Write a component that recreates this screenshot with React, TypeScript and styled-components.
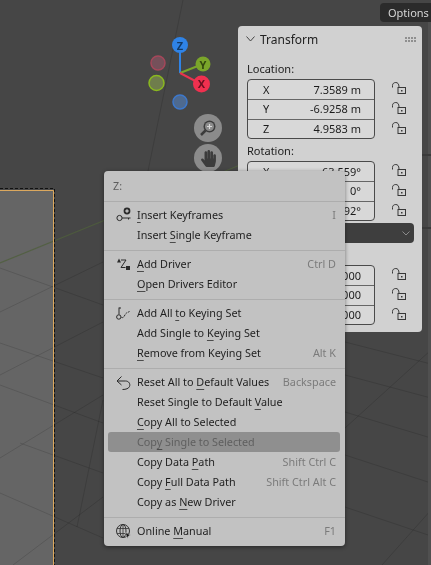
import { FC, ReactNode } from "react";
import styled, { createGlobalStyle } from "styled-components";
import { FaHandPaper } from "react-icons/fa";

const GlobalStyle = createGlobalStyle`
  html, body {
    margin: 0;
    padding: 0;
    background: #464646;
  }
  body {
    font-family: "Noto Sans", "DejaVu Sans", sans-serif;
  }
`;

// the 3d viewport is the free canvas, everything else floats over it
const Viewport = styled.div`
  position: relative;
  width: 431px;
  height: 565px;
  overflow: hidden;
  background: #464646;
  filter: blur(0.35px);
`;

const Scene = styled.svg`
  position: absolute;
  left: 0;
  top: 0;
`;

const OptionsTab = styled.div`
  position: absolute;
  right: 0;
  top: 3px;
  width: 43px;
  height: 19px;
  padding-left: 8px;
  display: flex;
  align-items: center;
  background: #2b2b2b;
  border-radius: 4px 0 0 4px;
  color: #d6d6d6;
  font-size: 11px;
  white-space: nowrap;
  overflow: hidden;
`;

const NavButton = styled.div<{ $top: number }>`
  position: absolute;
  left: 194px;
  top: ${(p) => p.$top}px;
  width: 28px;
  height: 28px;
  border-radius: 50%;
  background: #8b8b8b;
  display: flex;
  align-items: center;
  justify-content: center;
  color: #3c3c3c;
`;

const Panel = styled.div`
  position: absolute;
  left: 238px;
  top: 26px;
  width: 184px;
  height: 306px;
  box-sizing: border-box;
  padding: 0 8px 0 9px;
  background: #d1d1d1;
  border-radius: 4px;
  color: #1c1c1c;
  font-size: 11px;
`;

const PanelHeader = styled.div`
  display: flex;
  align-items: center;
  height: 28px;
  box-sizing: border-box;
  padding-bottom: 2px;
  font-size: 12px;
  color: #222;
`;

const Chevron = styled.svg`
  margin-right: 5px;
  margin-left: -1px;
`;

const PanelTitle = styled.span`
  flex: 1;
`;

const Grip = styled.div`
  display: grid;
  grid-template-columns: repeat(4, 2px);
  gap: 1px;
  margin-right: -2px;

  i {
    display: block;
    width: 2px;
    height: 2px;
    background: #8f8f8f;
  }
`;

const GroupLabel = styled.div<{ $height: number }>`
  display: flex;
  align-items: flex-end;
  height: ${(p) => p.$height}px;
  padding-bottom: 3px;
  box-sizing: border-box;
`;

const FieldRows = styled.div`
  display: flex;
  align-items: flex-start;
  height: 60px;
`;

const FieldBox = styled.div`
  width: 128px;
  box-sizing: border-box;
  border: 1px solid #4a4a4a;
  border-radius: 4px;
  background: #d8d8d8;
  overflow: hidden;
`;

const Field = styled.div`
  display: flex;
  justify-content: space-between;
  align-items: center;
  height: 19.33px;
  box-sizing: border-box;
  padding: 0 13px 1px 15px;
  white-space: nowrap;

  & + & {
    border-top: 1px solid #666;
  }
`;

const LockColumn = styled.div`
  display: flex;
  flex-direction: column;
  margin: 3px 0 0 17px;
`;

const LockIcon = styled.svg`
  display: block;
  margin-bottom: 6px;
`;

const Dropdown = styled.div`
  display: flex;
  align-items: center;
  justify-content: space-between;
  height: 20px;
  margin-top: 2px;
  padding: 0 4px 0 13px;
  background: #3e3e3e;
  border-radius: 4px;
  color: #d8d8d8;
`;

const Menu = styled.div`
  position: absolute;
  left: 104px;
  top: 171px;
  width: 241px;
  height: 375px;
  box-sizing: border-box;
  background: #c2c2c2;
  border-radius: 4px;
  box-shadow: 0 1px 4px rgba(0, 0, 0, 0.45);
  font-size: 10.8px;
  color: #1f1f1f;
`;

const MenuTitle = styled.div`
  display: flex;
  align-items: center;
  height: 25px;
  padding: 4px 0 0 9px;
  box-sizing: border-box;
  color: #5e5e5e;
`;

const Separator = styled.div`
  height: 1px;
  margin: 5px 0 3px;
  background: #adadad;
`;

const MenuRow = styled.div<{ $disabled?: boolean }>`
  display: flex;
  align-items: center;
  height: 20px;
  margin: 0 5px 0 4px;
  padding: 0 4px 0 8px;
  border-radius: 3px;
  white-space: nowrap;
  background: ${(p) => (p.$disabled ? "#8f8f8f" : "transparent")};
  color: ${(p) => (p.$disabled ? "#5f5f5f" : "inherit")};
`;

const IconSlot = styled.span`
  display: flex;
  align-items: center;
  width: 21px;
  height: 16px;
  flex: none;
`;

const RowLabel = styled.span`
  flex: 1;
  margin-top: -2px;
`;

const Mnemonic = styled.span`
  text-decoration: underline;
  text-decoration-color: #4c4c4c;
  text-decoration-skip-ink: none;
  text-underline-offset: 3px;
`;

const Shortcut = styled.span`
  margin-top: -2px;
  color: #7b7b7b;
`;

const ICON_COLOR = "#2a2a2a";

const KeyIcon = () => (
  <svg width="16" height="16" viewBox="0 0 16 16" fill="none" stroke={ICON_COLOR}>
    <circle cx="3.5" cy="11" r="2.6" />
    <path d="M6 11h8.5M12.5 11v1.5" />
    <circle cx="11" cy="4" r="3.4" fill={ICON_COLOR} stroke="none" />
    <path d="M9.2 4h3.6M11 2.2v3.6" stroke="#e6e6e6" />
  </svg>
);

const DriverIcon = () => (
  <svg width="16" height="16" viewBox="0 0 16 16" fill="none" stroke={ICON_COLOR}>
    <path d="M1 6.5L3 2.5l2 4z" fill={ICON_COLOR} stroke="none" />
    <path d="M5 4h5L5 11.5h4.5" />
    <rect x="10" y="10" width="4" height="4" fill={ICON_COLOR} stroke="none" />
  </svg>
);

const KeyingSetIcon = () => (
  <svg width="16" height="16" viewBox="0 0 16 16" fill="none" stroke={ICON_COLOR}>
    <path d="M3 2.5v7M3 3h2" />
    <circle cx="2.8" cy="12" r="2.2" />
    <path d="M5.5 12.5c3 1 3-3.5 5-4.5l3-1.5" strokeDasharray="2 1" />
  </svg>
);

const UndoIcon = () => (
  <svg width="16" height="17" viewBox="0 0 16 17" fill="none" stroke={ICON_COLOR}>
    <path d="M5.5 2.5L1 7l4.5 4" />
    <path d="M1 7h8.5c3.5 0 5 3 4 5.500-.8 2-3.500 3-7 3" />
  </svg>
);

const GlobeIcon = () => (
  <svg width="16" height="16" viewBox="0 0 16 16" fill="none" stroke="#333">
    <circle cx="7" cy="8" r="6.500" />
    <ellipse cx="7" cy="8" rx="3" ry="6.500" />
    <path d="M7 1.500v13M1 5.500h12M1 10.500h12" strokeWidth="0.8" />
    <path d="M9 9.500l5.500 2.500-2 1-.8 2.500z" fill="#111" stroke="#c2c2c2" strokeWidth="0.6" />
  </svg>
);

const Lock = () => (
  <LockIcon width="14" height="14" viewBox="0 0 14 14" fill="none" stroke="#383838">
    <path d="M.5 5.500V3.500C.5 1.500 2 .5 3.800 .5S7 1.800 7 5" />
    <rect x="6" y="5.500" width="7.500" height="6" />
    <rect x="9" y="8" width="1.500" height="1.500" fill="#383838" stroke="none" />
  </LockIcon>
);

type Axis = { axis: string; value: string };

const TransformGroup: FC<{ label: string; labelHeight: number; fields: Axis[] }> = ({
  label,
  labelHeight,
  fields,
}) => (
  <>
    <GroupLabel $height={labelHeight}>{label}</GroupLabel>
    <FieldRows>
      <FieldBox>
        {fields.map((f) => (
          <Field key={f.axis}>
            <span>{f.axis}</span>
            <span>{f.value}</span>
          </Field>
        ))}
      </FieldBox>
      <LockColumn>
        {fields.map((f) => (
          <Lock key={f.axis} />
        ))}
      </LockColumn>
    </FieldRows>
  </>
);

// "&" marks the accelerator letter, same as a windows menu resource
const withMnemonic = (label: string): ReactNode => {
  const i = label.indexOf("&");
  if (i < 0) return label;
  return (
    <>
      {label.slice(0, i)}
      <Mnemonic>{label[i + 1]}</Mnemonic>
      {label.slice(i + 2)}
    </>
  );
};

type Item = { label: string; shortcut?: string; icon?: ReactNode; disabled?: boolean };

const menuGroups: Item[][] = [
  [
    { label: "&Insert Keyframes", shortcut: "I", icon: <KeyIcon /> },
    { label: "Insert &Single Keyframe" },
  ],
  [
    { label: "&Add Driver", shortcut: "Ctrl D", icon: <DriverIcon /> },
    { label: "&Open Drivers Editor" },
  ],
  [
    { label: "Add All &to Keying Set", icon: <KeyingSetIcon /> },
    { label: "Add Single to &Keying Set" },
    { label: "&Remove from Keying Set", shortcut: "Alt K" },
  ],
  [
    { label: "Reset All to &Default Values", shortcut: "Backspace", icon: <UndoIcon /> },
    { label: "Reset Single to Default &Value" },
    { label: "&Copy All to Selected" },
    { label: "Cop&y Single to Selected", disabled: true },
    { label: "Copy Data &Path", shortcut: "Shift Ctrl C" },
    { label: "Copy &Full Data Path", shortcut: "Shift Ctrl Alt C" },
    { label: "Copy as &New Driver" },
  ],
  [{ label: "Online &Manual", shortcut: "F1", icon: <GlobeIcon /> }],
];

const GRID = "rgba(0,0,0,0.13)";

const gridLines = [
  "M345 342L431 364",
  "M345 375L431 398",
  "M345 412L431 438",
  "M345 455L431 483",
  "M345 507L431 536",
  "M345 428L431 350",
  "M382 565L431 510",
  "M0 268L103 305",
  "M0 343L103 378",
  "M0 385L103 423",
  "M0 493L103 538",
  "M20 443L103 473",
  "M0 312L103 262",
  "M0 375L103 322",
  "M0 458L103 395",
  "M13 565L103 497",
  "M103 400L77 527",
  "M183 0L148 171",
];

const ViewportScene = () => (
  <Scene width="431" height="565" viewBox="0 0 431 565">
    <rect x="0" y="190" width="54" height="375" fill="#656565" />
    {gridLines.map((d) => (
      <path key={d} d={d} stroke={GRID} strokeWidth="1" fill="none" />
    ))}
    <path d="M0 263L240 165" stroke="#4f5f3c" strokeWidth="1.2" fill="none" opacity="0.8" />
    <rect x="428" y="22" width="3" height="543" fill="#505050" />
    <rect x="422" y="154" width="9" height="2" fill="#3a3a3a" />
    <rect x="422" y="227" width="9" height="2" fill="#3a3a3a" />
    {/* camera frame */}
    <path d="M0 190.500H53.500V565" stroke="#dba85e" strokeWidth="1" fill="none" />
    <path d="M0 188.500H54.500V565" stroke="#111" strokeWidth="1" strokeDasharray="3 2" fill="none" />

    {/* axis gizmo */}
    <path d="M180 73V45" stroke="#2f83e6" strokeWidth="2" />
    <path d="M180 73L203 64" stroke="#7aa52a" strokeWidth="2" />
    <path d="M180 73L201 84" stroke="#e8344f" strokeWidth="2" />
    <circle cx="158" cy="63" r="7" fill="#75505a" stroke="#a5475a" strokeWidth="1.500" />
    <circle cx="156.500" cy="83" r="7.500" fill="#6f7d4c" stroke="#8ab81f" strokeWidth="1.500" />
    <circle cx="180" cy="102" r="7" fill="#4e6a90" stroke="#3d78cc" strokeWidth="1.500" />
    <circle cx="180" cy="45" r="8" fill="#2f83e6" />
    <circle cx="203" cy="64" r="7.500" fill="#7aa52a" />
    <circle cx="201.500" cy="84" r="8.500" fill="#f0304f" />
    <text x="180" y="49.500" textAnchor="middle" fontSize="11" fontWeight="700" fill="#123a66">Z</text>
    <text x="203" y="68.500" textAnchor="middle" fontSize="11" fontWeight="700" fill="#33480f">Y</text>
    <text x="201.500" y="88" textAnchor="middle" fontSize="11" fontWeight="700" fill="#6b1020">X</text>
  </Scene>
);

const App = () => {
  return (
    <Viewport>
      <GlobalStyle />
      <ViewportScene />
      <OptionsTab>Options</OptionsTab>

      <NavButton $top={114}>
        <svg width="20" height="20" viewBox="0 0 20 20" fill="none">
          <circle cx="11.500" cy="8.500" r="6" fill="#3c3c3c" />
          <circle cx="11.500" cy="8.500" r="4.500" fill="#8b8b8b" />
          <path d="M9 8.500h5M11.500 6v5" stroke="#d8d8d8" strokeWidth="1.200" />
          <path d="M7.500 12.500L3 17" stroke="#3c3c3c" strokeWidth="2.500" />
        </svg>
      </NavButton>
      <NavButton $top={144}>
        <FaHandPaper size={17} />
      </NavButton>

      <Panel>
        <PanelHeader>
          <Chevron width="9" height="6" viewBox="0 0 9 6" fill="none" stroke="#444">
            <path d="M.5 .5L4.500 5L8.500 .5" />
          </Chevron>
          <PanelTitle>Transform</PanelTitle>
          <Grip>
            {Array.from({ length: 8 }, (_, i) => (
              <i key={i} />
            ))}
          </Grip>
        </PanelHeader>
        <TransformGroup
          label="Location:"
          labelHeight={25}
          fields={[
            { axis: "X", value: "7.3589 m" },
            { axis: "Y", value: "-6.9258 m" },
            { axis: "Z", value: "4.9583 m" },
          ]}
        />
        <TransformGroup
          label="Rotation:"
          labelHeight={22}
          fields={[
            { axis: "X", value: "63.559°" },
            { axis: "Y", value: "0°" },
            { axis: "Z", value: "46.692°" },
          ]}
        />
        <Dropdown>
          <span>XYZ Euler</span>
          <svg width="8" height="5" viewBox="0 0 8 5" fill="none" stroke="#8a8a8a">
            <path d="M.5 .5L4 4L7.500 .5" />
          </svg>
        </Dropdown>
        <TransformGroup
          label="Scale:"
          labelHeight={22}
          fields={[
            { axis: "X", value: "1.000" },
            { axis: "Y", value: "1.000" },
            { axis: "Z", value: "1.000" },
          ]}
        />
      </Panel>

      <Menu>
        <MenuTitle>Z:</MenuTitle>
        {menuGroups.map((group, g) => (
          <div key={g}>
            <Separator />
            {group.map((item) => (
              <MenuRow key={item.label} $disabled={item.disabled}>
                <IconSlot>{item.icon}</IconSlot>
                <RowLabel>{withMnemonic(item.label)}</RowLabel>
                {item.shortcut && <Shortcut>{item.shortcut}</Shortcut>}
              </MenuRow>
            ))}
          </div>
        ))}
      </Menu>
    </Viewport>
  );
};

export default App;
